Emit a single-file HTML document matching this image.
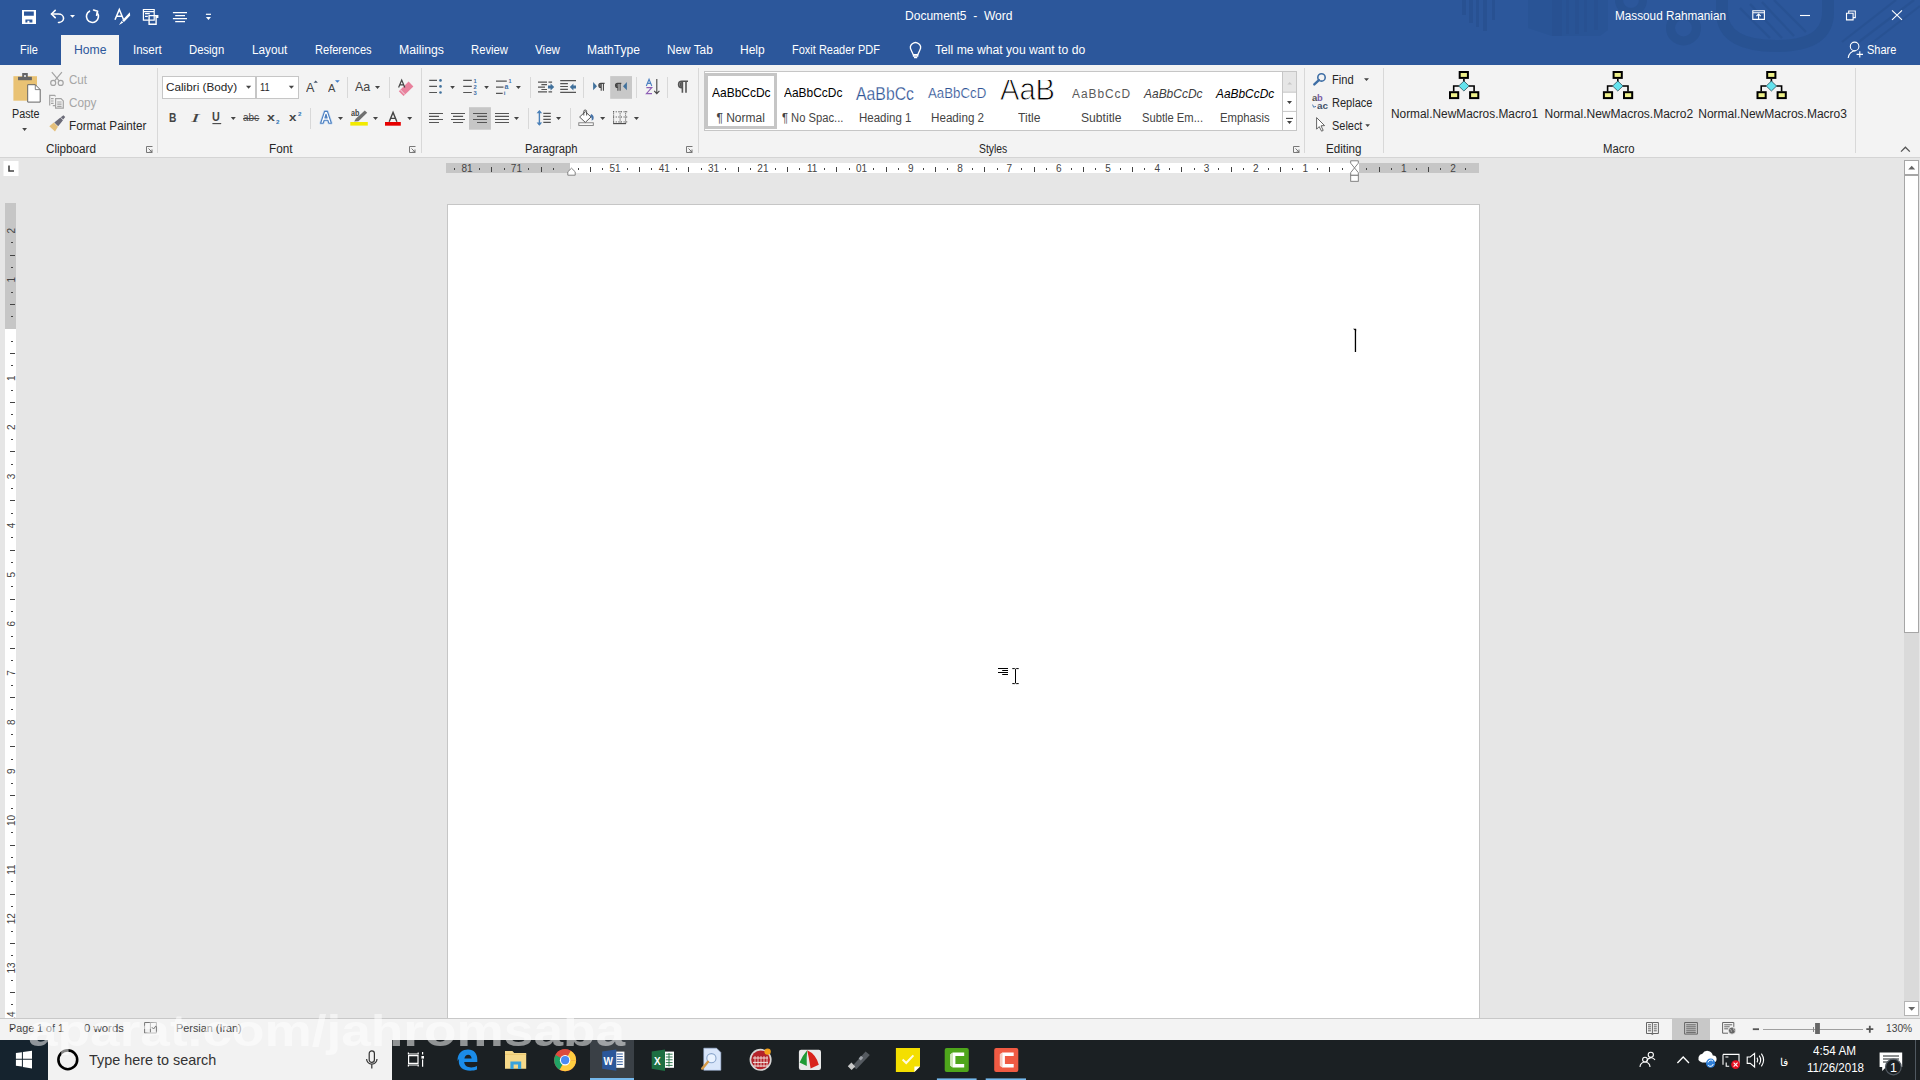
<!DOCTYPE html>
<html><head><meta charset="utf-8"><title>Document5 - Word</title>
<style>
html,body{margin:0;padding:0;width:1920px;height:1080px;overflow:hidden;background:#e6e6e6;font-family:'Liberation Sans', sans-serif;}
</style></head><body>
<div style="position:absolute;left:0px;top:0px;width:1920px;height:65px;background:#2c579b;"></div>
<div style="position:absolute;left:0px;top:65px;width:1920px;height:92px;background:#f3f3f3;"></div>
<div style="position:absolute;left:0px;top:158px;width:1920px;height:860px;background:#e6e6e6;"></div>
<div style="position:absolute;left:0px;top:1019px;width:1920px;height:21px;background:#f3f3f3;"></div>
<div style="position:absolute;left:0px;top:1040px;width:1920px;height:40px;background:#1b2023;"></div>
<div style="position:absolute;left:0px;top:1040px;width:48px;height:40px;background:#15232e;"></div>
<svg style="position:absolute;left:0px;top:0px;overflow:visible" width="1920" height="1080" viewBox="0 0 1920 1080">
<g fill="#27508f" opacity="0.75">
 <rect x="1462" y="0" width="4" height="15"/>
 <rect x="1469" y="0" width="4" height="23"/>
 <rect x="1476" y="0" width="3" height="27"/>
 <rect x="1483" y="0" width="4" height="31"/>
 <rect x="1492" y="0" width="3" height="20"/>
 <path d="M1528 0 H1608 V30 L1600 36 H1552 L1528 28 Z" opacity="0.55"/>
 <rect x="1552" y="0" width="10" height="36"/>
 <rect x="1566" y="0" width="3" height="34"/>
 <rect x="1575" y="0" width="4" height="34"/>
 <rect x="1584" y="0" width="3" height="32"/>
 <rect x="1594" y="0" width="4" height="30"/>
</g>
<g fill="none" stroke="#27508f" opacity="0.7">
 <circle cx="1683.5" cy="28" r="13" stroke-width="9"/>
 <path d="M1722 0 V12 C1722 38 1746 46 1776 46 C1806 46 1828 38 1828 12 V0" stroke-width="12"/>
 <circle cx="1631" cy="0" r="12" stroke-width="8"/>
</g>
<g stroke="#27508f" stroke-width="2.2" opacity="0.6">
 <path d="M1740 8 L1770 38 M1750 4 L1782 38 M1762 2 L1794 36 M1774 0 L1806 32"/>
 <path d="M1842 42 L1896 0 M1856 44 L1914 0 M1868 46 L1920 6"/>
</g>
</svg>
<div style="position:absolute;left:0px;top:157px;width:1920px;height:1px;background:#d4d4d4;"></div>
<div style="position:absolute;left:0px;top:1018px;width:1920px;height:1px;background:#c8c8c8;"></div>
<div style="position:absolute;left:61px;top:35px;width:58px;height:30px;background:#f3f3f3;"></div>
<div style="position:absolute;left:704px;top:71px;width:593px;height:60px;background:#ffffff;box-sizing:border-box;border:1px solid #c6c6c6;"></div>
<div style="position:absolute;left:447px;top:204px;width:1033px;height:814px;background:#ffffff;box-sizing:border-box;border:1px solid #c6c6c6;border-bottom:none;"></div>
<div style="position:absolute;left:48px;top:1040px;width:344px;height:40px;background:#f2f2f2;"></div>
<div style="position:absolute;left:705px;top:73px;width:72px;height:56px;background:transparent;box-sizing:border-box;border:3px solid #c6c6c6;"></div>
<svg style="position:absolute;left:0px;top:0px;overflow:visible" width="1920" height="1080" viewBox="0 0 1920 1080">
<rect x="13.4" y="76.2" width="23.6" height="24.5" fill="#e9c274"/>
<rect x="18" y="76.8" width="13.9" height="3.4" fill="#666666"/>
<rect x="22.2" y="73" width="5.6" height="4.4" fill="#666666"/>
<circle cx="25" cy="76" r="1" fill="#f3f3f3"/>
<path d="M27.7 84.7 H35.3 L40.2 89.6 V102.1 H27.7 Z" fill="#ffffff" stroke="#666666" stroke-width="1"/>
<path d="M35.3 84.7 V89.6 H40.2" fill="none" stroke="#666666" stroke-width="0.8"/>
<path d="M22.2 128.1 h4.8 l-2.4 2.9z" fill="#444444"/>
<g fill="none" stroke="#a3a3a3" stroke-width="1.2">
 <path d="M51.8 72.2 L59 80.6 M61.9 72.2 L54.8 80.6"/>
 <circle cx="53.2" cy="82.9" r="2.5"/>
 <circle cx="60.7" cy="82.9" r="2.5"/>
 <path d="M49.7 105.6 V95.4 H54.6 L55.6 96.4 M52.8 105.6 H55.4 M51 98.6 h2.6 M51 101 h2.6 M51 103.4 h2.6"/>
 <path d="M55.6 108.2 V98.6 H61 L63.3 100.9 V108.2 Z M57.2 102 h4.4 M57.2 104.2 h4.4 M57.2 106.4 h4.4"/>
</g>
<path d="M49.3 126.2 L53.8 122.6 L58 126.8 L55 131.4 Z" fill="#e5c07b"/>
<path d="M54.3 122.4 L60.4 117.6 L63 120.2 L58.2 126.3 Z" fill="#6b6b78"/>
<path d="M60.8 117.2 L63.4 115.2 L65.2 117 L63.2 119.6 Z" fill="#6b6b78"/>
<!-- separators -->
<g stroke="#d8d8d8" stroke-width="1">
 <path d="M157.5 68 V153"/><path d="M421.5 68 V153"/><path d="M698.5 68 V153"/><path d="M1304.5 68 V153"/><path d="M1383.5 68 V153"/><path d="M1855.5 68 V153"/>
 <path d="M347.5 77 V98"/><path d="M389.5 77 V98"/><path d="M310.5 108 V129"/>
 <path d="M530.5 77 V98"/><path d="M583.5 77 V98"/><path d="M636.5 77 V98"/><path d="M667.5 77 V98"/>
 <path d="M528.5 108 V129"/><path d="M570.5 108 V129"/>
</g>
<!-- dialog launchers -->
<g fill="none" stroke="#777777" stroke-width="1">
 <path d="M152.5 152.5 h-6 v-6 h6"/><path d="M148.5 148.5 l3.5 3.5 M152 149.5 v2.5 h-2.5"/>
 <path d="M415.5 152.5 h-6 v-6 h6"/><path d="M411.5 148.5 l3.5 3.5 M415 149.5 v2.5 h-2.5"/>
 <path d="M692.5 152.5 h-6 v-6 h6"/><path d="M688.5 148.5 l3.5 3.5 M692 149.5 v2.5 h-2.5"/>
 <path d="M1299.5 152.5 h-6 v-6 h6"/><path d="M1295.5 148.5 l3.5 3.5 M1299 149.5 v2.5 h-2.5"/>
</g>
<!-- font boxes -->
<rect x="162.5" y="76.5" width="93" height="22" fill="#ffffff" stroke="#c6c6c6"/>
<rect x="256.5" y="76.5" width="42" height="22" fill="#ffffff" stroke="#c6c6c6"/>
<g fill="#444444">
 <path d="M246 85.8 h5.2 l-2.6 3z"/>
 <path d="M288.8 85.8 h5.2 l-2.6 3z"/>
 <path d="M375 86 h5 l-2.5 2.9z"/>
 <path d="M230.8 117 h5 l-2.5 3z"/>
 <path d="M338 117.1 h5 l-2.5 2.9z"/>
 <path d="M373 117.1 h5 l-2.5 2.9z"/>
 <path d="M407.2 117.1 h5 l-2.5 2.9z"/>
</g>
<path d="M313.6 82.8 L315.7 80.4 L317.8 82.8 Z" fill="#44546a"/>
<path d="M335 80.2 H339.8 L337.4 82.8 Z" fill="#3d7cc9"/>
<!-- B I U etc (drawn as paths) -->
<path d="M212.4 123.6 h8.8" stroke="#444444" stroke-width="1.1"/>
<path d="M243.2 118.5 h16.2" stroke="#444444" stroke-width="1"/>
<!-- highlighter -->
<path d="M354.2 121.6 L356 118.4 L364.8 110.6 L367.2 112.8 L358.4 121.2 Z" fill="#707070"/>
<rect x="350.3" y="122" width="17.5" height="3.6" fill="#f2ea00"/>
<rect x="385" y="122" width="15.8" height="3.7" fill="#e60000"/>
<path d="M389.2 121.8 L393.05 112.4 L396.9 121.8 M390.6 118.4 h4.9" fill="none" stroke="#444444" stroke-width="1.4"/>
<!-- clear formatting eraser -->
<path d="M401.5 94 L398.8 91.3 L408.6 81.6 L413.4 86.4 L403.6 96.1 Z" fill="#e8819c"/>
<path d="M400.6 90 L405 94.6" stroke="#f3f3f3" stroke-width="0.8"/>
<path d="M398.6 87.6 L401.7 80 L404.8 87.6 M399.8 84.9 h3.8" fill="none" stroke="#444444" stroke-width="1.2"/>
</svg>
<svg style="position:absolute;left:0px;top:0px;overflow:visible" width="1920" height="1080" viewBox="0 0 1920 1080">
<path d="M320.6 123.2 L324.6 111.4 H327.4 L331.4 123.2 H328.8 L327.9 120.3 H324.1 L323.2 123.2 Z M324.9 117.9 H327.1 L326 114.2 Z" fill="#ffffff" fill-rule="evenodd" stroke="#c5daf2" stroke-width="2.6" stroke-linejoin="round"/>
<path d="M320.6 123.2 L324.6 111.4 H327.4 L331.4 123.2 H328.8 L327.9 120.3 H324.1 L323.2 123.2 Z M324.9 117.9 H327.1 L326 114.2 Z" fill="#ffffff" fill-rule="evenodd" stroke="#4a7ebf" stroke-width="1.1" stroke-linejoin="round"/>
</svg>
<svg style="position:absolute;left:0px;top:0px;overflow:visible" width="1920" height="1080" viewBox="0 0 1920 1080">
<rect x="610.2" y="76.1" width="21.8" height="22.7" fill="#c8c8c8"/>
<rect x="469" y="107.2" width="21.9" height="22.5" fill="#c6c6c6"/>
<g stroke="#555555" stroke-width="1.2">
 <path d="M429.2 80.4h7.8 M429.2 86.4h7.8 M429.2 92.5h7.8"/>
 <path d="M463.2 80.4h8.6 M463.2 86.4h8.6 M463.2 92.5h8.6"/>
 <path d="M496 81.2h10.8 M496 87.2h7.5 M496 93.3h6.7"/>
 <path d="M429 113.5h14 M429 116.4h10 M429 119.5h14 M429 122.5h10"/>
 <path d="M451 113.5h14 M453 116.4h10.1 M451 119.5h14 M453 122.5h10.1"/>
 <path d="M473 113.5h14 M477 116.4h10 M473 119.5h14 M477 122.5h10"/>
 <path d="M495 113.5h14 M495 116.4h14 M495 119.5h14 M495 122.5h14"/>
 <path d="M543.3 113.4h7.5 M543.3 116.4h7.5 M543.3 119.4h7.5 M543.3 122.4h7.5"/>
 <path d="M538 82.1h9 M548.5 82.1h3.6 M541.4 84.7h5.6 M538 87.1h7 M541.4 89.5h5.6 M538 91.9h9 M548.5 91.9h3.6"/>
 <path d="M560.2 80.6h15.8 M560.2 92.4h15.8 M560.2 83.6h7.7 M560.2 86.5h7.7 M560.2 89.4h7.7"/>
</g>
<g fill="#41719c">
 <circle cx="440.5" cy="80.4" r="1.3"/><circle cx="440.5" cy="86.4" r="1.3"/><circle cx="440.5" cy="92.5" r="1.3"/>
</g>
<g fill="#3f6fa6" font-family="Liberation Sans" font-weight="700">
 <text x="473.6" y="82.6" font-size="5.8">1</text>
 <text x="473.4" y="88.8" font-size="5.8">2</text>
 <text x="473.4" y="94.8" font-size="5.8">3</text>
 <text x="508.4" y="82.8" font-size="5.4">1</text>
 <text x="504.6" y="88.8" font-size="7">a</text>
 <text x="503.8" y="94.8" font-size="6">i</text>
</g>
<path d="M548 85.6h2.6v-2.2l3.6 3.6l-3.6 3.6v-2.2h-2.6z" fill="#41719c"/>
<path d="M576 85.6h-2.6v-2.2l-3.6 3.6l3.6 3.6v-2.2h2.6z" fill="#41719c"/>
<path d="M593.1 82.1 L597 86.2 L593.1 90.2 Z" fill="#41719c"/>
<path d="M626.9 82.1 L623 86.2 L626.9 90.2 Z" fill="#41719c"/>
<g fill="#444444">
 <path d="M450.2 86.1h4.7l-2.35 2.8z"/><path d="M484.2 86.1h4.7l-2.35 2.8z"/><path d="M515.9 86.1h5l-2.5 2.8z"/>
 <path d="M514 117h5l-2.5 3z"/><path d="M556 117h5.1l-2.55 3z"/><path d="M600.1 117h5.1l-2.55 3z"/><path d="M633.9 117h5.1l-2.55 3z"/>
</g>
<!-- pilcrows -->
<path d="M601.2 90.7 V83.4 M603.4 90.7 V83.4 M604.6 83.4 H600.8 A2 2 0 0 0 600.8 87.4 H601.2" stroke="#444444" stroke-width="1.1" fill="none"/>
<path d="M600.6 83.6 A1.9 1.9 0 0 0 600.6 87.3 Z" fill="#444444"/>
<path d="M617.9 90.7 V83.4 M620.1 90.7 V83.4 M621.3 83.4 H617.5 A2 2 0 0 0 617.5 87.4 H617.9" stroke="#444444" stroke-width="1.1" fill="none"/>
<path d="M617.3 83.6 A1.9 1.9 0 0 0 617.3 87.3 Z" fill="#444444"/>
<path d="M682.4 92.8 V81.2 M686 92.8 V81.2 M688 81.2 H681.8 A3.2 3.2 0 0 0 681.8 87.6 H682.4" stroke="#555555" stroke-width="1.6" fill="none"/>
<path d="M681.8 81.6 A3 3 0 0 0 681.8 87.4 Z" fill="#555555"/>
<!-- sort -->
<path d="M646.3 86 L649.05 79.2 L651.8 86 M647.4 83.4h3.3" stroke="#4a7fc1" stroke-width="1.1" fill="none"/>
<path d="M646.4 87.6h5.4l-5.4 6h5.6" stroke="#8e5fb5" stroke-width="1.1" fill="none"/>
<path d="M656.8 79.1v14 M654.2 90.8l2.6 2.8l2.6-2.8" stroke="#444444" stroke-width="1.1" fill="none"/>
<!-- line spacing arrows -->
<path d="M539.4 111 V125" stroke="#4a80b8" stroke-width="1.4"/>
<path d="M536.6 113.2 L539.4 110 L542.2 113.2 Z M536.6 122.6 L539.4 125.8 L542.2 122.6 Z" fill="#4a80b8"/>
<!-- shading -->
<rect x="578.8" y="122.8" width="14.5" height="2.6" fill="#ffffff" stroke="#777777" stroke-width="0.9"/>
<path d="M585.3 111.6 L591 117 L585.3 122.4 L579.6 117 Z" fill="#ffffff" stroke="#444444" stroke-width="0.9"/>
<path d="M583.8 115.5 V111.4 A1.4 1.4 0 0 1 586.6 111.4 V115.5" stroke="#444444" stroke-width="0.9" fill="none"/>
<path d="M591.2 114.1 Q594.6 115.6 593.4 119.6 L591.6 120.8 Q592.4 117.2 590 116.2 Z" fill="#4673a8"/>
<!-- borders -->
<g fill="#444444">
<rect x="613.10" y="111.3" width="1" height="1"/><rect x="615.72" y="111.3" width="1" height="1"/><rect x="618.34" y="111.3" width="1" height="1"/><rect x="620.96" y="111.3" width="1" height="1"/><rect x="623.58" y="111.3" width="1" height="1"/><rect x="626.20" y="111.3" width="1" height="1"/><rect x="613.10" y="116.5" width="1" height="1"/><rect x="615.72" y="116.5" width="1" height="1"/><rect x="618.34" y="116.5" width="1" height="1"/><rect x="620.96" y="116.5" width="1" height="1"/><rect x="623.58" y="116.5" width="1" height="1"/><rect x="626.20" y="116.5" width="1" height="1"/><rect x="613.10" y="121.4" width="1" height="1"/><rect x="615.72" y="121.4" width="1" height="1"/><rect x="618.34" y="121.4" width="1" height="1"/><rect x="620.96" y="121.4" width="1" height="1"/><rect x="623.58" y="121.4" width="1" height="1"/><rect x="626.20" y="121.4" width="1" height="1"/><rect x="613.1" y="111.30" width="1" height="1"/><rect x="613.1" y="113.35" width="1" height="1"/><rect x="613.1" y="115.40" width="1" height="1"/><rect x="613.1" y="117.45" width="1" height="1"/><rect x="613.1" y="119.50" width="1" height="1"/><rect x="613.1" y="121.55" width="1" height="1"/><rect x="619.6" y="111.30" width="1" height="1"/><rect x="619.6" y="113.35" width="1" height="1"/><rect x="619.6" y="115.40" width="1" height="1"/><rect x="619.6" y="117.45" width="1" height="1"/><rect x="619.6" y="119.50" width="1" height="1"/><rect x="619.6" y="121.55" width="1" height="1"/><rect x="625.1" y="111.30" width="1" height="1"/><rect x="625.1" y="113.35" width="1" height="1"/><rect x="625.1" y="115.40" width="1" height="1"/><rect x="625.1" y="117.45" width="1" height="1"/><rect x="625.1" y="119.50" width="1" height="1"/><rect x="625.1" y="121.55" width="1" height="1"/>
</g>
<path d="M613.1 123.6h13" stroke="#444444" stroke-width="1.1"/>
</svg>
<svg style="position:absolute;left:0px;top:0px;overflow:visible" width="1920" height="1080" viewBox="0 0 1920 1080">
<rect x="1282.5" y="71.5" width="14" height="59" fill="#ffffff" stroke="#c6c6c6"/>
<rect x="1283" y="72" width="13" height="20" fill="#e6e6e6"/>
<path d="M1282.5 92.2 H1296.5 M1282.5 111.4 H1296.5" stroke="#c6c6c6"/>
<path d="M1287.3 84.5 l2.4 -2.6 l2.4 2.6z" fill="#c8c8c8"/>
<path d="M1287 101 h5 l-2.5 2.9z M1287 121 h5 l-2.5 3z" fill="#444444"/>
<path d="M1286 118.4 h7" stroke="#444444" stroke-width="1.1"/>
<circle cx="1321.5" cy="77.4" r="3.7" fill="none" stroke="#3e6ea5" stroke-width="1.6"/>
<path d="M1318.9 80.1 L1314.3 84.4" stroke="#3e6ea5" stroke-width="2.4" stroke-linecap="round"/>
<path d="M1364 78.2 h5 l-2.5 2.7z M1365.3 124.3 h4.7 l-2.35 2.7z" fill="#444444"/>
<path d="M1316.6 117.6 V129.2 L1319.2 126.6 L1321.6 131.2 L1323.2 130.4 L1321 125.8 L1324.6 125.6 Z" fill="#ffffff" stroke="#555555" stroke-width="0.9" stroke-linejoin="round"/>
<path d="M1312.6 104.6 L1313.6 107.2 L1316 106.4" fill="none" stroke="#3e6ea5" stroke-width="0.9"/>
<path d="M1463.9 79 V82 M1458.9 86 H1453.7 V91.5 M1468.9 86 H1474.1000000000001 V91.5" stroke="#000" stroke-width="1.6" fill="none"/><rect x="1459.7" y="72" width="8.2" height="5.9" fill="#eef08a" stroke="#000" stroke-width="2"/><rect x="1450.0" y="92.2" width="8.2" height="5.9" fill="#eef08a" stroke="#000" stroke-width="2"/><rect x="1470.1000000000001" y="92.2" width="8.2" height="5.9" fill="#eef08a" stroke="#000" stroke-width="2"/><path d="M1463.9 81 L1469.1000000000001 86 L1463.9 91 L1458.7 86 Z" fill="#63e3ee" stroke="#1b3a45" stroke-width="0.7"/>
<path d="M1617.8 79 V82 M1612.8 86 H1607.6 V91.5 M1622.8 86 H1628.0 V91.5" stroke="#000" stroke-width="1.6" fill="none"/><rect x="1613.6" y="72" width="8.2" height="5.9" fill="#eef08a" stroke="#000" stroke-width="2"/><rect x="1603.8999999999999" y="92.2" width="8.2" height="5.9" fill="#eef08a" stroke="#000" stroke-width="2"/><rect x="1624.0" y="92.2" width="8.2" height="5.9" fill="#eef08a" stroke="#000" stroke-width="2"/><path d="M1617.8 81 L1623.0 86 L1617.8 91 L1612.6 86 Z" fill="#63e3ee" stroke="#1b3a45" stroke-width="0.7"/>
<path d="M1771.4 79 V82 M1766.4 86 H1761.2 V91.5 M1776.4 86 H1781.6000000000001 V91.5" stroke="#000" stroke-width="1.6" fill="none"/><rect x="1767.2" y="72" width="8.2" height="5.9" fill="#eef08a" stroke="#000" stroke-width="2"/><rect x="1757.5" y="92.2" width="8.2" height="5.9" fill="#eef08a" stroke="#000" stroke-width="2"/><rect x="1777.6000000000001" y="92.2" width="8.2" height="5.9" fill="#eef08a" stroke="#000" stroke-width="2"/><path d="M1771.4 81 L1776.6000000000001 86 L1771.4 91 L1766.2 86 Z" fill="#63e3ee" stroke="#1b3a45" stroke-width="0.7"/>
<path d="M1901 151.6 L1905.4 147.2 L1909.8 151.6" fill="none" stroke="#555555" stroke-width="1.3"/>
</svg>
<svg style="position:absolute;left:0px;top:0px;overflow:visible" width="1920" height="1080" viewBox="0 0 1920 1080"><rect x="446" y="163" width="124" height="10" fill="#c6c6c6"/><rect x="570" y="163" width="789" height="10" fill="#ffffff"/><rect x="1359" y="163" width="120" height="10" fill="#c6c6c6"/><rect x="3.5" y="161" width="15" height="15" fill="#ffffff"/><path d="M9 165.5 V171 H14" fill="none" stroke="#444" stroke-width="1.6"/><rect x="1465" y="168" width="1" height="2" fill="#444"/><rect x="1440" y="168" width="1" height="2" fill="#444"/><rect x="1428" y="167" width="1" height="5" fill="#444"/><rect x="1416" y="168" width="1" height="2" fill="#444"/><rect x="1391" y="168" width="1" height="2" fill="#444"/><rect x="1379" y="167" width="1" height="5" fill="#444"/><rect x="1366" y="168" width="1" height="2" fill="#444"/><rect x="1342" y="168" width="1" height="2" fill="#444"/><rect x="1329" y="167" width="1" height="5" fill="#444"/><rect x="1317" y="168" width="1" height="2" fill="#444"/><rect x="1292" y="168" width="1" height="2" fill="#444"/><rect x="1280" y="167" width="1" height="5" fill="#444"/><rect x="1268" y="168" width="1" height="2" fill="#444"/><rect x="1243" y="168" width="1" height="2" fill="#444"/><rect x="1231" y="167" width="1" height="5" fill="#444"/><rect x="1218" y="168" width="1" height="2" fill="#444"/><rect x="1194" y="168" width="1" height="2" fill="#444"/><rect x="1181" y="167" width="1" height="5" fill="#444"/><rect x="1169" y="168" width="1" height="2" fill="#444"/><rect x="1144" y="168" width="1" height="2" fill="#444"/><rect x="1132" y="167" width="1" height="5" fill="#444"/><rect x="1120" y="168" width="1" height="2" fill="#444"/><rect x="1095" y="168" width="1" height="2" fill="#444"/><rect x="1083" y="167" width="1" height="5" fill="#444"/><rect x="1071" y="168" width="1" height="2" fill="#444"/><rect x="1046" y="168" width="1" height="2" fill="#444"/><rect x="1034" y="167" width="1" height="5" fill="#444"/><rect x="1021" y="168" width="1" height="2" fill="#444"/><rect x="997" y="168" width="1" height="2" fill="#444"/><rect x="984" y="167" width="1" height="5" fill="#444"/><rect x="972" y="168" width="1" height="2" fill="#444"/><rect x="947" y="168" width="1" height="2" fill="#444"/><rect x="935" y="167" width="1" height="5" fill="#444"/><rect x="923" y="168" width="1" height="2" fill="#444"/><rect x="898" y="168" width="1" height="2" fill="#444"/><rect x="886" y="167" width="1" height="5" fill="#444"/><rect x="873" y="168" width="1" height="2" fill="#444"/><rect x="849" y="168" width="1" height="2" fill="#444"/><rect x="836" y="167" width="1" height="5" fill="#444"/><rect x="824" y="168" width="1" height="2" fill="#444"/><rect x="799" y="168" width="1" height="2" fill="#444"/><rect x="787" y="167" width="1" height="5" fill="#444"/><rect x="775" y="168" width="1" height="2" fill="#444"/><rect x="750" y="168" width="1" height="2" fill="#444"/><rect x="738" y="167" width="1" height="5" fill="#444"/><rect x="725" y="168" width="1" height="2" fill="#444"/><rect x="701" y="168" width="1" height="2" fill="#444"/><rect x="688" y="167" width="1" height="5" fill="#444"/><rect x="676" y="168" width="1" height="2" fill="#444"/><rect x="651" y="168" width="1" height="2" fill="#444"/><rect x="639" y="167" width="1" height="5" fill="#444"/><rect x="627" y="168" width="1" height="2" fill="#444"/><rect x="602" y="168" width="1" height="2" fill="#444"/><rect x="590" y="167" width="1" height="5" fill="#444"/><rect x="578" y="168" width="1" height="2" fill="#444"/><rect x="553" y="168" width="1" height="2" fill="#444"/><rect x="541" y="167" width="1" height="5" fill="#444"/><rect x="528" y="168" width="1" height="2" fill="#444"/><rect x="504" y="168" width="1" height="2" fill="#444"/><rect x="491" y="167" width="1" height="5" fill="#444"/><rect x="479" y="168" width="1" height="2" fill="#444"/><rect x="454" y="168" width="1" height="2" fill="#444"/><path d="M567.8 175.2 V171.8 L571.5 168.2 L575.2 171.8 V175.2 Z" fill="#ffffff" stroke="#777" stroke-width="0.9"/><path d="M1350.7 160.8 H1358.3 V163.2 L1354.5 167.9 L1350.7 163.2 Z M1354.5 167.9 L1350.7 172.6 V175.3 H1358.3 V172.6 Z" fill="#ffffff" stroke="#777" stroke-width="0.9"/><rect x="1350.7" y="175.3" width="7.6" height="6" fill="#ffffff" stroke="#777" stroke-width="0.9"/><rect x="5" y="203" width="11" height="126" fill="#c6c6c6"/><rect x="5" y="329" width="11" height="689" fill="#ffffff"/><rect x="11" y="242" width="2" height="1" fill="#444"/><rect x="10" y="255" width="5" height="1" fill="#444"/><rect x="11" y="267" width="2" height="1" fill="#444"/><rect x="11" y="292" width="2" height="1" fill="#444"/><rect x="10" y="304" width="5" height="1" fill="#444"/><rect x="11" y="316" width="2" height="1" fill="#444"/><rect x="11" y="341" width="2" height="1" fill="#444"/><rect x="10" y="353" width="5" height="1" fill="#444"/><rect x="11" y="365" width="2" height="1" fill="#444"/><rect x="11" y="390" width="2" height="1" fill="#444"/><rect x="10" y="402" width="5" height="1" fill="#444"/><rect x="11" y="414" width="2" height="1" fill="#444"/><rect x="11" y="439" width="2" height="1" fill="#444"/><rect x="10" y="451" width="5" height="1" fill="#444"/><rect x="11" y="464" width="2" height="1" fill="#444"/><rect x="11" y="488" width="2" height="1" fill="#444"/><rect x="10" y="500" width="5" height="1" fill="#444"/><rect x="11" y="513" width="2" height="1" fill="#444"/><rect x="11" y="537" width="2" height="1" fill="#444"/><rect x="10" y="550" width="5" height="1" fill="#444"/><rect x="11" y="562" width="2" height="1" fill="#444"/><rect x="11" y="586" width="2" height="1" fill="#444"/><rect x="10" y="599" width="5" height="1" fill="#444"/><rect x="11" y="611" width="2" height="1" fill="#444"/><rect x="11" y="636" width="2" height="1" fill="#444"/><rect x="10" y="648" width="5" height="1" fill="#444"/><rect x="11" y="660" width="2" height="1" fill="#444"/><rect x="11" y="685" width="2" height="1" fill="#444"/><rect x="10" y="697" width="5" height="1" fill="#444"/><rect x="11" y="709" width="2" height="1" fill="#444"/><rect x="11" y="734" width="2" height="1" fill="#444"/><rect x="10" y="746" width="5" height="1" fill="#444"/><rect x="11" y="759" width="2" height="1" fill="#444"/><rect x="11" y="783" width="2" height="1" fill="#444"/><rect x="10" y="795" width="5" height="1" fill="#444"/><rect x="11" y="808" width="2" height="1" fill="#444"/><rect x="11" y="832" width="2" height="1" fill="#444"/><rect x="10" y="845" width="5" height="1" fill="#444"/><rect x="11" y="857" width="2" height="1" fill="#444"/><rect x="11" y="881" width="2" height="1" fill="#444"/><rect x="10" y="894" width="5" height="1" fill="#444"/><rect x="11" y="906" width="2" height="1" fill="#444"/><rect x="11" y="931" width="2" height="1" fill="#444"/><rect x="10" y="943" width="5" height="1" fill="#444"/><rect x="11" y="955" width="2" height="1" fill="#444"/><rect x="11" y="980" width="2" height="1" fill="#444"/><rect x="10" y="992" width="5" height="1" fill="#444"/><rect x="11" y="1004" width="2" height="1" fill="#444"/><rect x="11" y="1029" width="2" height="1" fill="#444"/><defs><clipPath id="vclip" clipPathUnits="userSpaceOnUse"><rect x="0" y="203" width="30" height="815"/></clipPath></defs><g clip-path="url(#vclip)"><text x="0" y="0" transform="translate(15.2 230.6) rotate(-90)" text-anchor="middle" font-family="Liberation Sans" font-size="10" fill="#444">2</text><text x="0" y="0" transform="translate(15.2 279.8) rotate(-90)" text-anchor="middle" font-family="Liberation Sans" font-size="10" fill="#444">1</text><text x="0" y="0" transform="translate(15.2 378.1) rotate(-90)" text-anchor="middle" font-family="Liberation Sans" font-size="10" fill="#444">1</text><text x="0" y="0" transform="translate(15.2 427.2) rotate(-90)" text-anchor="middle" font-family="Liberation Sans" font-size="10" fill="#444">2</text><text x="0" y="0" transform="translate(15.2 476.4) rotate(-90)" text-anchor="middle" font-family="Liberation Sans" font-size="10" fill="#444">3</text><text x="0" y="0" transform="translate(15.2 525.5) rotate(-90)" text-anchor="middle" font-family="Liberation Sans" font-size="10" fill="#444">4</text><text x="0" y="0" transform="translate(15.2 574.7) rotate(-90)" text-anchor="middle" font-family="Liberation Sans" font-size="10" fill="#444">5</text><text x="0" y="0" transform="translate(15.2 623.8) rotate(-90)" text-anchor="middle" font-family="Liberation Sans" font-size="10" fill="#444">6</text><text x="0" y="0" transform="translate(15.2 673.0) rotate(-90)" text-anchor="middle" font-family="Liberation Sans" font-size="10" fill="#444">7</text><text x="0" y="0" transform="translate(15.2 722.1) rotate(-90)" text-anchor="middle" font-family="Liberation Sans" font-size="10" fill="#444">8</text><text x="0" y="0" transform="translate(15.2 771.3) rotate(-90)" text-anchor="middle" font-family="Liberation Sans" font-size="10" fill="#444">9</text><text x="0" y="0" transform="translate(15.2 820.5) rotate(-90)" text-anchor="middle" font-family="Liberation Sans" font-size="10" fill="#444">10</text><text x="0" y="0" transform="translate(15.2 869.6) rotate(-90)" text-anchor="middle" font-family="Liberation Sans" font-size="10" fill="#444">11</text><text x="0" y="0" transform="translate(15.2 918.8) rotate(-90)" text-anchor="middle" font-family="Liberation Sans" font-size="10" fill="#444">12</text><text x="0" y="0" transform="translate(15.2 967.9) rotate(-90)" text-anchor="middle" font-family="Liberation Sans" font-size="10" fill="#444">13</text><text x="0" y="0" transform="translate(15.2 1017.0) rotate(-90)" text-anchor="middle" font-family="Liberation Sans" font-size="10" fill="#444">14</text></g><text x="1453.1" y="172" text-anchor="middle" font-family="Liberation Sans" font-size="10" fill="#444">2</text><text x="1403.8" y="172" text-anchor="middle" font-family="Liberation Sans" font-size="10" fill="#444">1</text><text x="1305.2" y="172" text-anchor="middle" font-family="Liberation Sans" font-size="10" fill="#444">1</text><text x="1255.9" y="172" text-anchor="middle" font-family="Liberation Sans" font-size="10" fill="#444">2</text><text x="1206.6" y="172" text-anchor="middle" font-family="Liberation Sans" font-size="10" fill="#444">3</text><text x="1157.3" y="172" text-anchor="middle" font-family="Liberation Sans" font-size="10" fill="#444">4</text><text x="1108.0" y="172" text-anchor="middle" font-family="Liberation Sans" font-size="10" fill="#444">5</text><text x="1058.7" y="172" text-anchor="middle" font-family="Liberation Sans" font-size="10" fill="#444">6</text><text x="1009.4" y="172" text-anchor="middle" font-family="Liberation Sans" font-size="10" fill="#444">7</text><text x="960.1" y="172" text-anchor="middle" font-family="Liberation Sans" font-size="10" fill="#444">8</text><text x="910.8" y="172" text-anchor="middle" font-family="Liberation Sans" font-size="10" fill="#444">9</text><text x="861.5" y="172" text-anchor="middle" font-family="Liberation Sans" font-size="10" fill="#444">01</text><text x="812.2" y="172" text-anchor="middle" font-family="Liberation Sans" font-size="10" fill="#444">11</text><text x="762.9" y="172" text-anchor="middle" font-family="Liberation Sans" font-size="10" fill="#444">21</text><text x="713.6" y="172" text-anchor="middle" font-family="Liberation Sans" font-size="10" fill="#444">31</text><text x="664.3" y="172" text-anchor="middle" font-family="Liberation Sans" font-size="10" fill="#444">41</text><text x="615.0" y="172" text-anchor="middle" font-family="Liberation Sans" font-size="10" fill="#444">51</text><text x="516.4" y="172" text-anchor="middle" font-family="Liberation Sans" font-size="10" fill="#444">71</text><text x="467.1" y="172" text-anchor="middle" font-family="Liberation Sans" font-size="10" fill="#444">81</text><rect x="1904" y="632" width="15" height="369" fill="#dadada"/><rect x="1904.5" y="160.5" width="14" height="14" fill="#ffffff" stroke="#a6a6a6"/><path d="M1908.2 169.5 h7 l-3.5 -3.8z" fill="#666"/><rect x="1904.5" y="175.5" width="14" height="457" fill="#ffffff" stroke="#a6a6a6"/><rect x="1904.5" y="1001.5" width="14" height="14" fill="#ffffff" stroke="#b4b4b4"/><path d="M1908.2 1007 h7 l-3.5 3.8z" fill="#666"/><rect x="1354.8" y="329" width="1.3" height="23" fill="#000"/><path d="M1353 328.8 H1356.1 V331.2 Z" fill="#000"/><path d="M998 668.5 h10 M1002.2 670.5 h5.8 M998 672.5 h10 M1002.2 674.5 h5.8" stroke="#000" stroke-width="1"/><path d="M1012.3 668.6 h2.4 l0.8 0.6 l0.8 -0.6 h2.4 M1015.5 669.2 V683 M1012.3 683.6 h2.4 l0.8 -0.6 l0.8 0.6 h2.4" fill="none" stroke="#000" stroke-width="1"/><rect x="1672" y="1019" width="38" height="21" fill="#c8c8c8"/><g fill="none" stroke="#666" stroke-width="1">
 <path d="M1646.5 1022.5 h5.9 v11 h-5.9z M1652.4 1022.5 h6 v11 h-6"/>
 <path d="M1648 1024.8h3 M1648 1026.8h3 M1648 1028.8h3 M1648 1030.8h3 M1653.8 1024.8h3 M1653.8 1026.8h3 M1653.8 1028.8h3 M1653.8 1030.8h3"/>
 <path d="M1684.6 1022.5 h12.8 v11.6 h-12.8z"/>
 <path d="M1686.2 1024.8h9.6 M1686.2 1026.8h9.6 M1686.2 1028.8h9.6 M1686.2 1030.8h9.6 M1686.2 1032.6h9.6"/>
 <path d="M1728 1033.2 h-5.4 v-10.7 h11.2 v4.4"/>
 <path d="M1724.2 1024.8h8 M1724.2 1026.8h5.5 M1724.2 1028.8h4"/>
 <path d="M1763 1029.5 h100" stroke="#a0a0a0"/>
 <path d="M1813.5 1027 v5" stroke="#888"/>
 <path d="M144.6 1022.5 h5.8 v10.5 h-5.8z M150.4 1022.5 h6 v10.5 h-6" stroke="#777"/>
 <path d="M151.8 1027.2 l1.8 1.8 l2.8 -3.8" stroke="#777"/>
</g>
<path d="M1652.4 1033.5 l-1.2 1.3 h2.4z" fill="#666"/>
<circle cx="1732" cy="1030.6" r="3.6" fill="#666" stroke="#f3f3f3" stroke-width="0.8"/>
<path d="M1730 1028.8 q1.6 1 1.4 3 M1733.4 1027.6 q-0.6 2.2 1.6 3.6" stroke="#ccc" stroke-width="0.7" fill="none"/>
<rect x="1815.1" y="1023" width="4.8" height="11" fill="#666"/>
<rect x="1752.8" y="1028.3" width="6.2" height="1.8" fill="#555"/>
<path d="M1866.3 1029.2 h7 M1869.8 1025.7 v7" stroke="#555" stroke-width="1.8"/>
</svg>
<svg style="position:absolute;left:0px;top:0px;overflow:visible" width="1920" height="1080" viewBox="0 0 1920 1080">
<path d="M15.9 1053 L21.9 1052.2 V1058.8 H15.9 Z M22.9 1052 L32 1050.8 V1058.8 H22.9 Z M15.9 1059.8 H21.9 V1066.6 L15.9 1065.8 Z M22.9 1059.8 H32 V1068.4 L22.9 1067 Z" fill="#ffffff"/>
<circle cx="67.8" cy="1059.8" r="9.4" fill="none" stroke="#000" stroke-width="2.6"/>
<path d="M369.2 1053.4 a2.6 2.6 0 0 1 5.2 0 v6.4 a2.6 2.6 0 0 1 -5.2 0 z M366.6 1059 a5.2 5.2 0 0 0 10.4 0 M371.8 1064.4 v4.2" fill="none" stroke="#333" stroke-width="1.2"/>
<g fill="none" stroke="#ffffff" stroke-width="1.2">
 <path d="M408.4 1052.4 V1054 H418.2 V1052.4 M408.4 1066.6 V1065 H418.2 V1066.6 M408.6 1055.6 H418 V1063.4 H408.6 Z M422.6 1059.6 V1066.8 M422.6 1052 V1054.6"/>
</g>
<rect x="421.4" y="1056" width="2.6" height="2.6" fill="#fff"/>
<!-- edge -->
<path d="M457.5 1061 C457.5 1052 463 1049.5 468 1049.5 C474 1049.5 477.3 1053.5 477.3 1059.5 V1062 H464.2 C464.6 1066 467.6 1067.4 471.2 1067.4 C473.6 1067.4 475.6 1066.8 477 1066 V1069.6 C475.2 1070.4 472.8 1070.8 470.2 1070.8 C463 1070.8 458.8 1067 458.8 1061.6 C458.8 1057.6 461.4 1054.6 464.6 1053.6 C462 1055.2 460.2 1057.6 457.5 1061 Z M464.4 1058.6 H471.6 C471.6 1056.2 470 1054.8 468.2 1054.8 C466.2 1054.8 464.8 1056.4 464.4 1058.6 Z" fill="#1b8ce8"/>
<!-- folder -->
<path d="M505 1051 H512.4 L514.2 1053 H526.2 V1068.8 H505 Z" fill="#f6d98a"/>
<path d="M505 1054.4 H526.2" stroke="#e8c46a" stroke-width="0.8"/>
<path d="M510.4 1069 V1061.4 H521.2 V1069 H518 V1064.6 H513.6 V1069 Z" fill="#3aa3dc"/>
<!-- chrome -->
<circle cx="565.1" cy="1060.2" r="11" fill="#dd4b3e"/>
<path d="M565.1 1060.2 L555.6 1054.7 A11 11 0 0 0 559.6 1069.7 Z" fill="#21a365"/>
<path d="M565.1 1060.2 L559.6 1069.7 A11 11 0 0 0 576.1 1060.2 Z" fill="#ffcd40"/>
<path d="M565.1 1060.2 L576.1 1060.2 A11 11 0 0 0 570.6 1050.7 Z" fill="#ffcd40"/>
<path d="M565.1 1060.2 L570.6 1050.7 A11 11 0 0 0 555.6 1054.7 Z" fill="#dd4b3e"/>
<circle cx="565.1" cy="1060.2" r="5.2" fill="#ffffff"/>
<circle cx="565.1" cy="1060.2" r="4.1" fill="#4a8af4"/>
<!-- word active -->
<rect x="590" y="1040" width="44" height="40" fill="#3a4046"/>
<rect x="590" y="1078" width="44" height="2" fill="#76b9ed"/>
<path d="M615.3 1051.6 H624.4 V1067.8 H615.3 Z" fill="#ffffff"/>
<path d="M616.8 1054 h6 M616.8 1056.6 h6 M616.8 1059.2 h6 M616.8 1061.8 h6 M616.8 1064.4 h6" stroke="#2b579a" stroke-width="1"/>
<path d="M602.2 1051.6 L616.3 1049.6 V1070.8 L602.2 1068.8 Z" fill="#2b579a"/>
<text x="603.6" y="1065" font-family="Liberation Sans" font-weight="700" font-size="10" fill="#fff">W</text>
<!-- excel -->
<path d="M664.3 1051.6 H674 V1067.8 H664.3 Z" fill="#ffffff"/>
<path d="M665.8 1054.2 h6.8 M665.8 1057 h6.8 M665.8 1059.8 h6.8 M665.8 1062.6 h6.8 M665.8 1065.4 h6.8 M669 1053 v13.6" stroke="#1d6f42" stroke-width="0.9"/>
<path d="M651.7 1051.6 L665 1049.4 V1071 L651.7 1068.8 Z" fill="#1d6f42"/>
<text x="654" y="1064.6" font-family="Liberation Sans" font-weight="700" font-size="10" fill="#fff">X</text>
<!-- search doc -->
<path d="M703.8 1048.2 H716.6 L720.8 1052.4 V1070.2 H703.8 Z" fill="#d9e6fa" stroke="#a9bfe6" stroke-width="0.6"/>
<circle cx="711.4" cy="1058.2" r="4.6" fill="#eaf3ff" stroke="#8aa6cc" stroke-width="1.1"/>
<path d="M708 1061.8 L702.2 1068.6" stroke="#d59a4a" stroke-width="2.4" stroke-linecap="round"/>
<!-- colosseum -->
<circle cx="760.6" cy="1059.8" r="11" fill="#d6d6d6"/>
<circle cx="760.6" cy="1059.8" r="9.4" fill="#b4232a"/>
<path d="M753 1058 h15 M753 1062.4 h15 M753 1066 h15" stroke="#f2e6e0" stroke-width="1"/>
<path d="M755 1056 v11 M758 1056 v11 M761 1056 v11 M764 1056 v11 M767 1056 v11" stroke="#f2e6e0" stroke-width="0.8"/>
<circle cx="767.6" cy="1051.6" r="3.2" fill="#f6a21a"/>
<!-- faststone -->
<rect x="798.9" y="1049.8" width="22.1" height="20.2" rx="2.2" fill="#e9e9e9"/>
<path d="M807.2 1050.2 Q816 1054 818.8 1064.8 L810.6 1068.6 Q809 1058 807.2 1050.2 Z" fill="#d8231b"/>
<path d="M807.2 1050.2 Q802 1056 799.6 1062.6 L806.8 1066 Q806.4 1057.6 807.2 1050.2 Z" fill="#1f9a35"/>
<!-- usb -->
<path d="M852.4 1066 L865.6 1051.6 L869.8 1055 L856.4 1069.2 Z" fill="#555a60"/>
<path d="M847.8 1066.2 L851.4 1062.6 L855.2 1066.4 L851.6 1070 Z" fill="#c8c8c8"/>
<path d="M858.6 1058.4 L861 1055.8 L863.2 1057.8 L860.8 1060.4 Z" fill="#9da2a8"/>
<!-- sticky -->
<path d="M895.9 1047.9 H920 V1066.4 L914.4 1072 H895.9 Z" fill="#f4df00"/>
<path d="M920 1066.4 L914.4 1072 V1066.4 Z" fill="#ffffff"/>
<path d="M902.6 1059.6 L906.2 1063 L913.4 1055.4" fill="none" stroke="#fffbe0" stroke-width="2"/>
<!-- camtasia green & red -->
<rect x="944.7" y="1048" width="24.1" height="24" rx="2" fill="#4ea61b"/>
<rect x="936.9" y="1078.4" width="39.7" height="1.6" fill="#76b9ed"/>
<path d="M950.4 1054.2 L953 1052.6 H964.2 V1056 H955.4 V1064 H964.2 V1067.4 H953 L950.4 1065.8 Z" fill="#ffffff"/>
<path d="M950.4 1054.2 L953 1052.6 V1067.4 L950.4 1065.8 Z" fill="#cfe8b8"/>
<rect x="994.2" y="1048" width="24.1" height="24" rx="2" fill="#f05a43"/>
<rect x="985.7" y="1078.4" width="40.3" height="1.6" fill="#76b9ed"/>
<path d="M999.9 1054.2 L1002.5 1052.6 H1013.7 V1056 H1004.9 V1064 H1013.7 V1067.4 H1002.5 L999.9 1065.8 Z" fill="#ffffff"/>
<path d="M999.9 1054.2 L1002.5 1052.6 V1067.4 L999.9 1065.8 Z" fill="#f8c8bd"/>
<!-- tray -->
<g fill="none" stroke="#ffffff" stroke-width="1.1">
 <circle cx="1650.8" cy="1054.8" r="2.6"/>
 <path d="M1646.8 1061.6 a4.4 4.4 0 0 1 8.2 -1.6"/>
 <circle cx="1645" cy="1059.6" r="2.4"/>
 <path d="M1640 1067 a5 5 0 0 1 10 0"/>
 <path d="M1677.4 1063 L1683.2 1057 L1689 1063" stroke-width="1.3"/>
 <path d="M1723 1054.4 h16 v10 h-3 M1723 1054.4 v10.4 M1725.4 1057 h3 M1726.2 1062.4 v3.8 h3"/>
 <path d="M1747.2 1057 h3 l4.4 -3.6 v13.6 l-4.4 -3.6 h-3 z M1757 1057.6 q1.6 2.4 0 4.8 M1759.2 1055.6 q3 4.4 0 8.8 M1761.4 1053.6 q4.4 6.4 0 12.8"/>
 <path d="M1879.6 1052.4 h22.6 v14.6 h-16 l-4 4 v-4 h-2.6 z" fill="#ffffff" stroke="none"/>
</g>
<path d="M1883 1056 h16 M1883 1059 h16 M1883 1062 h12" stroke="#1b2023" stroke-width="1.1"/>
<circle cx="1735.6" cy="1064.6" r="4.4" fill="#e81123"/>
<path d="M1733.6 1062.6 l4 4 M1737.6 1062.6 l-4 4" stroke="#fff" stroke-width="1.1"/>
<path d="M1700 1061.6 a4.4 4.4 0 0 1 2.4 -7.8 a5.6 5.6 0 0 1 10.4 1.6 a3.6 3.6 0 0 1 0.4 7.2 h-11 z" fill="#ffffff"/>
<circle cx="1710.6" cy="1063.2" r="4.6" fill="#2f7fd8"/>
<path d="M1708 1062.4 a2.8 2.8 0 0 1 5 -1.2 M1713.2 1064 a2.8 2.8 0 0 1 -5 1.2" stroke="#fff" stroke-width="1" fill="none"/>
<circle cx="1893.4" cy="1067" r="7.8" fill="#1b2023" stroke="#505860" stroke-width="1.2"/>
<text x="1893.4" y="1071.6" text-anchor="middle" font-family="Liberation Sans" font-size="12.5" fill="#fff">1</text>
<rect x="1915" y="1040" width="1" height="40" fill="#505860"/>
</svg>
<svg style="position:absolute;left:0px;top:0px;overflow:visible" width="1920" height="1080" viewBox="0 0 1920 1080">
<g fill="#ffffff">
 <path d="M22 10h14v14h-14z M24 11.6v4.2h9.8v-4.2z M25.4 19.6v2.8h2v-1.6h2v1.6h3v-2.8z" fill-rule="evenodd"/>
</g>
<g fill="none" stroke="#ffffff" stroke-width="1.6" stroke-linecap="round" stroke-linejoin="round">
 <path d="M51.5 14 H58.5 A5 4.2 0 0 1 58.5 22.5 H59.5" />
 <path d="M55.2 10.4 L51.5 14 L55.2 17.6"/>
 <path d="M97.2 12.8 A6 6 0 1 1 89.5 11.2" />
 <path d="M93.6 10 L97.6 11.2 L96.6 15.2"/>
</g>
<path d="M70 15 h5 l-2.5 2.8z" fill="#ffffff"/>
<g fill="none" stroke="#ffffff" stroke-width="1.5">
 <path d="M115 19.8 L119.3 9.5 L123.6 19.8 M116.7 16.3 h5.4"/>
</g>
<path d="M129.8 12.3 L130.2 15.5 L124 22 L122.2 20.5 Z M121.6 21 L123.3 22.6 L119 25 Z" fill="#ffffff"/>
<g fill="none" stroke="#ffffff" stroke-width="1.2">
 <path d="M143.4 9.5h10.8v10.6h-10.8z M143.4 11.6h10.8"/>
 <path d="M145 13.6h4.8 M145 16.4h2.8"/>
</g>
<path d="M148.4 15h10v3h-1.6v7h-8.4z M149.8 16.2v7.4h5.6v-7.4z" fill="#ffffff" fill-rule="evenodd"/>
<g stroke="#ffffff" stroke-width="1.2">
 <path d="M172.9 12.6h14.1 M175.2 15.6h9.8 M172.9 18.6h14.1 M175.2 21.6h9.8"/>
 <path d="M205.9 14.3h5.1"/>
</g>
<path d="M205.9 17.1h5.1l-2.55 2.9z" fill="#ffffff"/>
<!-- right controls -->
<g fill="none" stroke="#ffffff" stroke-width="1.1">
 <path d="M1752.8 10.7h11.6v8.7h-11.6z M1752.8 12.8h11.6"/>
 <path d="M1758.6 19.4v-5.2 M1756.4 16.2l2.2-2.1l2.2 2.1"/>
 <path d="M1800 15.5h10"/>
 <path d="M1846.5 13.3h6.6v6.6h-6.6z M1848.7 13.3v-2.3h6.6v6.6h-2.2"/>
 <path d="M1892 10.3l10 9.6 M1902 10.3l-10 9.6"/>
</g>
<!-- share -->
<g fill="none" stroke="#ffffff" stroke-width="1.1">
 <circle cx="1854.6" cy="46.4" r="4.3"/>
 <path d="M1848.2 58 A7.5 7.5 0 0 1 1855.8 50.8"/>
 <path d="M1859.8 51.2v6.4 M1856.6 54.4h6.4"/>
</g>
<!-- lightbulb -->
<g fill="none" stroke="#ffffff" stroke-width="1.3">
 <path d="M913.2 54.6 L911.2 50.2 A5 5 0 1 1 919.8 50.2 L917.8 54.6 Z"/>
 <path d="M913.5 54.6h4.2v1.6h-4.2z"/>
 <path d="M914 57.6h3.2"/>
</g>
</svg>
<div style="position:absolute;left:905.00px;top:8.80px;color:#ffffff;font-family:'Liberation Sans', sans-serif;font-size:13px;font-weight:400;white-space:pre;line-height:13px;transform:scaleX(0.9260);transform-origin:0 0;">Document5&nbsp; -&nbsp; Word</div>
<div style="position:absolute;left:1615.00px;top:10.45px;color:#ffffff;font-family:'Liberation Sans', sans-serif;font-size:12.5px;font-weight:400;white-space:pre;line-height:12.5px;transform:scaleX(0.9397);transform-origin:0 0;">Massoud Rahmanian</div>
<div style="position:absolute;left:20.40px;top:43.95px;color:#ffffff;font-family:'Liberation Sans', sans-serif;font-size:12.5px;font-weight:400;white-space:pre;line-height:12.5px;transform:scaleX(0.8831);transform-origin:0 0;">File</div>
<div style="position:absolute;left:132.90px;top:43.95px;color:#ffffff;font-family:'Liberation Sans', sans-serif;font-size:12.5px;font-weight:400;white-space:pre;line-height:12.5px;transform:scaleX(0.9211);transform-origin:0 0;">Insert</div>
<div style="position:absolute;left:189.40px;top:43.95px;color:#ffffff;font-family:'Liberation Sans', sans-serif;font-size:12.5px;font-weight:400;white-space:pre;line-height:12.5px;transform:scaleX(0.9044);transform-origin:0 0;">Design</div>
<div style="position:absolute;left:252.30px;top:43.95px;color:#ffffff;font-family:'Liberation Sans', sans-serif;font-size:12.5px;font-weight:400;white-space:pre;line-height:12.5px;transform:scaleX(0.9432);transform-origin:0 0;">Layout</div>
<div style="position:absolute;left:315.40px;top:43.95px;color:#ffffff;font-family:'Liberation Sans', sans-serif;font-size:12.5px;font-weight:400;white-space:pre;line-height:12.5px;transform:scaleX(0.8852);transform-origin:0 0;">References</div>
<div style="position:absolute;left:399.00px;top:43.95px;color:#ffffff;font-family:'Liberation Sans', sans-serif;font-size:12.5px;font-weight:400;white-space:pre;line-height:12.5px;transform:scaleX(0.9813);transform-origin:0 0;">Mailings</div>
<div style="position:absolute;left:471.00px;top:43.95px;color:#ffffff;font-family:'Liberation Sans', sans-serif;font-size:12.5px;font-weight:400;white-space:pre;line-height:12.5px;transform:scaleX(0.9024);transform-origin:0 0;">Review</div>
<div style="position:absolute;left:535.00px;top:43.95px;color:#ffffff;font-family:'Liberation Sans', sans-serif;font-size:12.5px;font-weight:400;white-space:pre;line-height:12.5px;transform:scaleX(0.9302);transform-origin:0 0;">View</div>
<div style="position:absolute;left:587.00px;top:43.95px;color:#ffffff;font-family:'Liberation Sans', sans-serif;font-size:12.5px;font-weight:400;white-space:pre;line-height:12.5px;transform:scaleX(0.9656);transform-origin:0 0;">MathType</div>
<div style="position:absolute;left:667.00px;top:43.95px;color:#ffffff;font-family:'Liberation Sans', sans-serif;font-size:12.5px;font-weight:400;white-space:pre;line-height:12.5px;transform:scaleX(0.9438);transform-origin:0 0;">New Tab</div>
<div style="position:absolute;left:740.00px;top:43.95px;color:#ffffff;font-family:'Liberation Sans', sans-serif;font-size:12.5px;font-weight:400;white-space:pre;line-height:12.5px;transform:scaleX(0.9604);transform-origin:0 0;">Help</div>
<div style="position:absolute;left:792.00px;top:43.95px;color:#ffffff;font-family:'Liberation Sans', sans-serif;font-size:12.5px;font-weight:400;white-space:pre;line-height:12.5px;transform:scaleX(0.8797);transform-origin:0 0;">Foxit Reader PDF</div>
<div style="position:absolute;left:935.40px;top:43.95px;color:#ffffff;font-family:'Liberation Sans', sans-serif;font-size:12.5px;font-weight:400;white-space:pre;line-height:12.5px;transform:scaleX(0.9737);transform-origin:0 0;">Tell me what you want to do</div>
<div style="position:absolute;left:73.75px;top:43.95px;color:#2c579b;font-family:'Liberation Sans', sans-serif;font-size:12.5px;font-weight:400;white-space:pre;line-height:12.5px;transform:scaleX(0.9747);transform-origin:0 0;">Home</div>
<div style="position:absolute;left:1866.70px;top:44.05px;color:#ffffff;font-family:'Liberation Sans', sans-serif;font-size:12.5px;font-weight:400;white-space:pre;line-height:12.5px;transform:scaleX(0.8783);transform-origin:0 0;">Share</div>
<div style="position:absolute;left:11.50px;top:107.75px;color:#262626;font-family:'Liberation Sans', sans-serif;font-size:12px;font-weight:400;white-space:pre;line-height:12px;transform:scaleX(0.8961);transform-origin:0 0;">Paste</div>
<div style="position:absolute;left:68.50px;top:73.75px;color:#a6a6a6;font-family:'Liberation Sans', sans-serif;font-size:12px;font-weight:400;white-space:pre;line-height:12px;transform:scaleX(0.9632);transform-origin:0 0;">Cut</div>
<div style="position:absolute;left:68.50px;top:97.00px;color:#a6a6a6;font-family:'Liberation Sans', sans-serif;font-size:12px;font-weight:400;white-space:pre;line-height:12px;transform:scaleX(0.9816);transform-origin:0 0;">Copy</div>
<div style="position:absolute;left:68.50px;top:119.60px;color:#262626;font-family:'Liberation Sans', sans-serif;font-size:12px;font-weight:400;white-space:pre;line-height:12px;transform:scaleX(0.9766);transform-origin:0 0;">Format Painter</div>
<div style="position:absolute;left:45.60px;top:143.00px;color:#262626;font-family:'Liberation Sans', sans-serif;font-size:12px;font-weight:400;white-space:pre;line-height:12px;transform:scaleX(0.9732);transform-origin:0 0;">Clipboard</div>
<div style="position:absolute;left:269.40px;top:143.00px;color:#262626;font-family:'Liberation Sans', sans-serif;font-size:12px;font-weight:400;white-space:pre;line-height:12px;transform:scaleX(0.9827);transform-origin:0 0;">Font</div>
<div style="position:absolute;left:525.00px;top:143.00px;color:#262626;font-family:'Liberation Sans', sans-serif;font-size:12px;font-weight:400;white-space:pre;line-height:12px;transform:scaleX(0.9349);transform-origin:0 0;">Paragraph</div>
<div style="position:absolute;left:979.25px;top:143.00px;color:#262626;font-family:'Liberation Sans', sans-serif;font-size:12px;font-weight:400;white-space:pre;line-height:12px;transform:scaleX(0.8642);transform-origin:0 0;">Styles</div>
<div style="position:absolute;left:1325.80px;top:143.00px;color:#262626;font-family:'Liberation Sans', sans-serif;font-size:12px;font-weight:400;white-space:pre;line-height:12px;transform:scaleX(0.9672);transform-origin:0 0;">Editing</div>
<div style="position:absolute;left:1603.00px;top:143.00px;color:#262626;font-family:'Liberation Sans', sans-serif;font-size:12px;font-weight:400;white-space:pre;line-height:12px;transform:scaleX(0.9447);transform-origin:0 0;">Macro</div>
<div style="position:absolute;left:165.60px;top:81.50px;color:#262626;font-family:'Liberation Sans', sans-serif;font-size:11.5px;font-weight:400;white-space:pre;line-height:11.5px;transform:scaleX(1.0205);transform-origin:0 0;">Calibri (Body)</div>
<div style="position:absolute;left:260.00px;top:81.50px;color:#262626;font-family:'Liberation Sans', sans-serif;font-size:11.5px;font-weight:400;white-space:pre;line-height:11.5px;transform:scaleX(0.8115);transform-origin:0 0;">11</div>
<div style="position:absolute;left:1331.60px;top:73.70px;color:#262626;font-family:'Liberation Sans', sans-serif;font-size:12px;font-weight:400;white-space:pre;line-height:12px;transform:scaleX(0.9296);transform-origin:0 0;">Find</div>
<div style="position:absolute;left:1331.60px;top:96.80px;color:#262626;font-family:'Liberation Sans', sans-serif;font-size:12px;font-weight:400;white-space:pre;line-height:12px;transform:scaleX(0.9175);transform-origin:0 0;">Replace</div>
<div style="position:absolute;left:1331.60px;top:119.60px;color:#262626;font-family:'Liberation Sans', sans-serif;font-size:12px;font-weight:400;white-space:pre;line-height:12px;transform:scaleX(0.9113);transform-origin:0 0;">Select</div>
<div style="position:absolute;left:1390.50px;top:107.90px;color:#262626;font-family:'Liberation Sans', sans-serif;font-size:12px;font-weight:400;white-space:pre;line-height:12px;transform:scaleX(0.9885);transform-origin:0 0;">Normal.NewMacros.Macro1</div>
<div style="position:absolute;left:1544.50px;top:107.90px;color:#262626;font-family:'Liberation Sans', sans-serif;font-size:12px;font-weight:400;white-space:pre;line-height:12px;">Normal.NewMacros.Macro2</div>
<div style="position:absolute;left:1698.25px;top:107.90px;color:#262626;font-family:'Liberation Sans', sans-serif;font-size:12px;font-weight:400;white-space:pre;line-height:12px;">Normal.NewMacros.Macro3</div>
<div style="position:absolute;left:711.70px;top:86.35px;color:#000000;font-family:'Liberation Sans', sans-serif;font-size:13.5px;font-weight:400;white-space:pre;line-height:13.5px;transform:scaleX(0.8875);transform-origin:0 0;">AaBbCcDc</div>
<div style="position:absolute;left:716.40px;top:112.00px;color:#444444;font-family:'Liberation Sans', sans-serif;font-size:12px;font-weight:400;white-space:pre;line-height:12px;">&#182; Normal</div>
<div style="position:absolute;left:783.60px;top:86.35px;color:#000000;font-family:'Liberation Sans', sans-serif;font-size:13.5px;font-weight:400;white-space:pre;line-height:13.5px;transform:scaleX(0.8844);transform-origin:0 0;">AaBbCcDc</div>
<div style="position:absolute;left:782.00px;top:112.00px;color:#444444;font-family:'Liberation Sans', sans-serif;font-size:12px;font-weight:400;white-space:pre;line-height:12px;transform:scaleX(0.9330);transform-origin:0 0;">&#182; No Spac...</div>
<div style="position:absolute;left:856.00px;top:84.70px;color:#2f5496;font-family:'Liberation Sans', sans-serif;font-size:18px;font-weight:400;white-space:pre;line-height:18px;transform:scaleX(0.8782);transform-origin:0 0;-webkit-text-stroke:0.25px #fff;">AaBbCc</div>
<div style="position:absolute;left:858.60px;top:112.00px;color:#444444;font-family:'Liberation Sans', sans-serif;font-size:12px;font-weight:400;white-space:pre;line-height:12px;transform:scaleX(0.9576);transform-origin:0 0;">Heading 1</div>
<div style="position:absolute;left:927.80px;top:84.60px;color:#2f5496;font-family:'Liberation Sans', sans-serif;font-size:15px;font-weight:400;white-space:pre;line-height:15px;transform:scaleX(0.8837);transform-origin:0 0;-webkit-text-stroke:0.2px #fff;">AaBbCcD</div>
<div style="position:absolute;left:930.50px;top:112.00px;color:#444444;font-family:'Liberation Sans', sans-serif;font-size:12px;font-weight:400;white-space:pre;line-height:12px;transform:scaleX(0.9704);transform-origin:0 0;">Heading 2</div>
<div style="position:absolute;left:1000.00px;top:72.70px;color:#000000;font-family:'Liberation Sans', sans-serif;font-size:32px;font-weight:400;white-space:pre;line-height:32px;transform:scaleX(0.9093);transform-origin:0 0;-webkit-text-stroke:0.9px #fff;clip-path:inset(7.2px 0 0 0);">AaB</div>
<div style="position:absolute;left:1017.50px;top:112.00px;color:#444444;font-family:'Liberation Sans', sans-serif;font-size:12px;font-weight:400;white-space:pre;line-height:12px;transform:scaleX(1.0119);transform-origin:0 0;">Title</div>
<div style="position:absolute;left:1071.70px;top:87.75px;color:#5a5a5a;font-family:'Liberation Sans', sans-serif;font-size:12.5px;font-weight:400;white-space:pre;line-height:12.5px;letter-spacing:1px;transform:scaleX(0.9549);transform-origin:0 0;">AaBbCcD</div>
<div style="position:absolute;left:1080.80px;top:112.00px;color:#444444;font-family:'Liberation Sans', sans-serif;font-size:12px;font-weight:400;white-space:pre;line-height:12px;transform:scaleX(1.0117);transform-origin:0 0;">Subtitle</div>
<div style="position:absolute;left:1144.00px;top:87.00px;color:#404040;font-family:'Liberation Sans', sans-serif;font-size:13px;font-weight:400;white-space:pre;line-height:13px;font-style:italic;transform:scaleX(0.9201);transform-origin:0 0;">AaBbCcDc</div>
<div style="position:absolute;left:1142.00px;top:112.00px;color:#444444;font-family:'Liberation Sans', sans-serif;font-size:12px;font-weight:400;white-space:pre;line-height:12px;transform:scaleX(0.9331);transform-origin:0 0;">Subtle Em...</div>
<div style="position:absolute;left:1215.80px;top:87.00px;color:#000000;font-family:'Liberation Sans', sans-serif;font-size:13px;font-weight:400;white-space:pre;line-height:13px;font-style:italic;transform:scaleX(0.9154);transform-origin:0 0;">AaBbCcDc</div>
<div style="position:absolute;left:1220.30px;top:112.00px;color:#444444;font-family:'Liberation Sans', sans-serif;font-size:12px;font-weight:400;white-space:pre;line-height:12px;transform:scaleX(0.9433);transform-origin:0 0;">Emphasis</div>
<div style="position:absolute;left:8.75px;top:1023.10px;color:#444444;font-family:'Liberation Sans', sans-serif;font-size:11px;font-weight:400;white-space:pre;line-height:11px;transform:scaleX(0.9772);transform-origin:0 0;">Page 1 of 1</div>
<div style="position:absolute;left:84.20px;top:1023.10px;color:#444444;font-family:'Liberation Sans', sans-serif;font-size:11px;font-weight:400;white-space:pre;line-height:11px;transform:scaleX(1.0381);transform-origin:0 0;">0 words</div>
<div style="position:absolute;left:176.30px;top:1023.10px;color:#444444;font-family:'Liberation Sans', sans-serif;font-size:11px;font-weight:400;white-space:pre;line-height:11px;transform:scaleX(0.9859);transform-origin:0 0;">Persian (Iran)</div>
<div style="position:absolute;left:1885.80px;top:1023.10px;color:#444444;font-family:'Liberation Sans', sans-serif;font-size:11px;font-weight:400;white-space:pre;line-height:11px;transform:scaleX(0.9310);transform-origin:0 0;">130%</div>
<div style="position:absolute;left:88.70px;top:1053.15px;color:#333333;font-family:'Liberation Sans', sans-serif;font-size:14.5px;font-weight:400;white-space:pre;line-height:14.5px;transform:scaleX(0.9932);transform-origin:0 0;">Type here to search</div>
<div style="position:absolute;left:1813.00px;top:1044.90px;color:#ffffff;font-family:'Liberation Sans', sans-serif;font-size:12px;font-weight:400;white-space:pre;line-height:12px;transform:scaleX(0.9766);transform-origin:0 0;">4:54 AM</div>
<div style="position:absolute;left:1806.70px;top:1062.40px;color:#ffffff;font-family:'Liberation Sans', sans-serif;font-size:12px;font-weight:400;white-space:pre;line-height:12px;transform:scaleX(0.9641);transform-origin:0 0;">11/26/2018</div>
<div style="position:absolute;left:305.60px;top:81.35px;color:#444444;font-family:'Liberation Sans', sans-serif;font-size:13.5px;font-weight:400;white-space:pre;line-height:13.5px;transform:scaleX(0.9317);transform-origin:0 0;">A</div>
<div style="position:absolute;left:328.00px;top:83.35px;color:#444444;font-family:'Liberation Sans', sans-serif;font-size:10.5px;font-weight:400;white-space:pre;line-height:10.5px;transform:scaleX(1.0548);transform-origin:0 0;">A</div>
<div style="position:absolute;left:355.00px;top:79.70px;color:#444444;font-family:'Liberation Sans', sans-serif;font-size:13px;font-weight:400;white-space:pre;line-height:13px;transform:scaleX(0.9619);transform-origin:0 0;">Aa</div>
<div style="position:absolute;left:168.60px;top:111.55px;color:#444444;font-family:'Liberation Sans', sans-serif;font-size:12.5px;font-weight:700;white-space:pre;line-height:12.5px;transform:scaleX(0.8194);transform-origin:0 0;">B</div>
<div style="position:absolute;left:190.90px;top:111.55px;color:#444444;font-family:'Liberation Sans', sans-serif;font-size:12.5px;font-weight:400;white-space:pre;line-height:12.5px;font-style:italic;transform:scaleX(2.0090);transform-origin:0 0;font-family:'Liberation Serif',serif;">I</div>
<div style="position:absolute;left:212.40px;top:111.30px;color:#444444;font-family:'Liberation Sans', sans-serif;font-size:12px;font-weight:700;white-space:pre;line-height:12px;transform:scaleX(0.8995);transform-origin:0 0;">U</div>
<div style="position:absolute;left:243.25px;top:112.25px;color:#444444;font-family:'Liberation Sans', sans-serif;font-size:11.5px;font-weight:400;white-space:pre;line-height:11.5px;transform:scaleX(0.8654);transform-origin:0 0;">abc</div>
<div style="position:absolute;left:267.00px;top:112.10px;color:#444444;font-family:'Liberation Sans', sans-serif;font-size:11px;font-weight:700;white-space:pre;line-height:11px;transform:scaleX(1.2898);transform-origin:0 0;">x</div>
<div style="position:absolute;left:275.70px;top:119.00px;color:#2e74b5;font-family:'Liberation Sans', sans-serif;font-size:6px;font-weight:700;white-space:pre;line-height:6px;transform:scaleX(1.0467);transform-origin:0 0;">2</div>
<div style="position:absolute;left:288.95px;top:112.10px;color:#444444;font-family:'Liberation Sans', sans-serif;font-size:11px;font-weight:700;white-space:pre;line-height:11px;transform:scaleX(1.2163);transform-origin:0 0;">x</div>
<div style="position:absolute;left:297.50px;top:110.70px;color:#2e74b5;font-family:'Liberation Sans', sans-serif;font-size:6px;font-weight:700;white-space:pre;line-height:6px;transform:scaleX(1.0467);transform-origin:0 0;">2</div>
<div style="position:absolute;left:350.90px;top:109.25px;color:#444444;font-family:'Liberation Sans', sans-serif;font-size:8.5px;font-weight:700;white-space:pre;line-height:8.5px;transform:scaleX(0.8466);transform-origin:0 0;">ab</div>
<div style="position:absolute;left:1312.10px;top:93.05px;color:#555555;font-family:'Liberation Sans', sans-serif;font-size:9.5px;font-weight:700;white-space:pre;line-height:9.5px;">a</div>
<div style="position:absolute;left:1317.40px;top:93.05px;color:#7a5ca6;font-family:'Liberation Sans', sans-serif;font-size:9.5px;font-weight:700;white-space:pre;line-height:9.5px;transform:scaleX(0.9806);transform-origin:0 0;">b</div>
<div style="position:absolute;left:1317.10px;top:100.65px;color:#44546a;font-family:'Liberation Sans', sans-serif;font-size:9.5px;font-weight:700;white-space:pre;line-height:9.5px;transform:scaleX(1.0399);transform-origin:0 0;">ac</div>
<div style="position:absolute;left:1780.00px;top:1056.50px;color:#ffffff;font-family:'Liberation Sans', sans-serif;font-size:11px;font-weight:400;white-space:pre;line-height:11px;">&#1601;&#1575;</div>
<div style="position:absolute;left:28.00px;top:1009.00px;color:rgba(255,255,255,0.52);font-family:'Liberation Sans', sans-serif;font-size:44px;font-weight:700;white-space:pre;line-height:44px;transform:scaleX(1.2086);transform-origin:0 0;">aparat.com/jahromsaba</div>
</body></html>
